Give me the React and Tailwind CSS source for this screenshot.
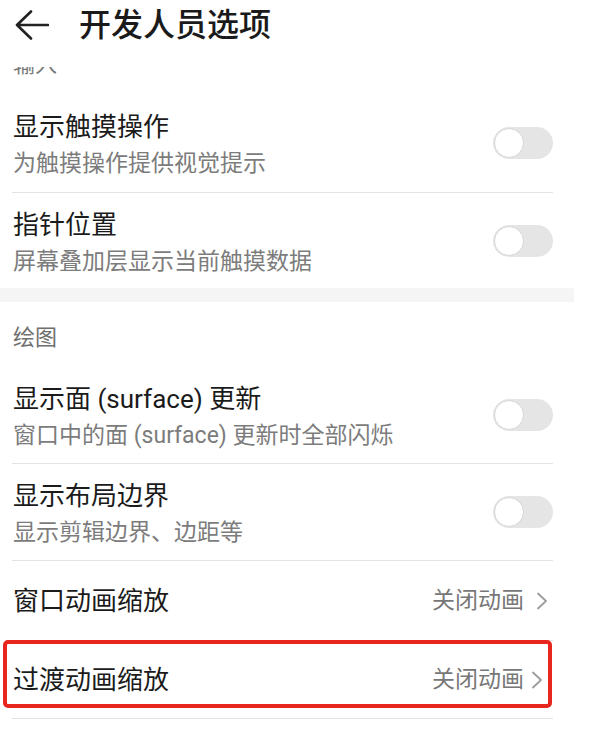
import React from "react";

const font = "font-['Roboto','Noto_Sans_CJK_SC',sans-serif]";

function Toggle() {
  return (
    <div className="flex items-center w-[60px] h-[32px] mb-[6px] rounded-full bg-[#e5e5e5] pl-px shrink-0">
      <div className="w-[30px] h-[30px] rounded-full bg-white border-[1.5px] border-[#d6d6d6]" />
    </div>
  );
}

function SwitchRow({ title, desc, divider, pb = "pb-[8px]" }) {
  return (
    <div
      className={`ml-[12px] mr-[47px] flex items-center justify-between pt-[14px] ${pb} ${
        divider ? "border-b border-[#e3e3e3]" : ""
      }`}
    >
      <div className="pl-px">
        <div className="text-[26px] leading-[36px] text-[#1b1b1b]">{title}</div>
        <div className="text-[23px] leading-[38px] text-[#7c7c7c]">{desc}</div>
      </div>
      <Toggle />
    </div>
  );
}

function Chevron({ className }) {
  return (
    <svg viewBox="0 0 12 18" className={`w-[12px] h-[18px] ${className}`} fill="none">
      <path d="M2 1.5 L10 9 L2 16.5" stroke="#9c9c9c" strokeWidth="1.8" strokeLinecap="round" strokeLinejoin="round" />
    </svg>
  );
}

export default function App() {
  return (
    <div className={`w-[600px] h-[742px] bg-white overflow-hidden ${font}`}>
      {/* header */}
      <div className="flex items-center h-[50px] pl-[14px]">
        <svg viewBox="0 0 35 30" className="w-[35px] h-[30px]" fill="none">
          <path d="M3 15 H34 M17 1.5 L3 15 L17 28.5" stroke="#222" strokeWidth="2.6" strokeLinecap="round" strokeLinejoin="round" />
        </svg>
        <div className="ml-[30px] text-[32px] leading-[40px] font-medium text-[#1a1a1a]">开发人员选项</div>
      </div>

      {/* section label scrolled under the header */}
      <div className="mt-[17px] h-[8px] overflow-hidden">
        <div className="-mt-[17px] pl-[13px] text-[22px] leading-[30px] text-[#777]">输入</div>
      </div>

      <div className="mt-[20px]">
        <SwitchRow title="显示触摸操作" desc="为触摸操作提供视觉提示" divider pb="pb-[9px]" />
        <SwitchRow title="指针位置" desc="屏幕叠加层显示当前触摸数据" pb="pb-[7px]" />
      </div>

      <div className="w-[574px] h-[14px] bg-[#f5f5f5]" />

      <div className="pt-[21px] pb-[14px] pl-[13px] text-[22px] leading-[30px] text-[#707070]">绘图</div>

      <SwitchRow title="显示面 (surface) 更新" desc="窗口中的面 (surface) 更新时全部闪烁" divider />
      <SwitchRow title="显示布局边界" desc="显示剪辑边界、边距等" divider />

      <div className="ml-[12px] mr-[47px] h-[79px] box-content flex items-center justify-between border-b border-[#e3e3e3]">
        <div className="pl-px text-[26px] leading-[36px] text-[#1b1b1b]">窗口动画缩放</div>
        <div className="flex items-center">
          <span className="text-[23px] leading-[30px] text-[#777]">关闭动画</span>
          <Chevron className="ml-[12px] mr-[5px]" />
        </div>
      </div>

      <div className="relative ml-[12px] mr-[47px] h-[77px] box-content flex items-center justify-between border-b border-[#e3e3e3]">
        <div className="pl-px text-[26px] leading-[36px] text-[#1b1b1b]">过渡动画缩放</div>
        <div className="flex items-center">
          <span className="text-[23px] leading-[30px] text-[#777]">关闭动画</span>
          <Chevron className="ml-[7px] mr-[10px]" />
        </div>
        <div className="absolute top-[-1px] left-[-9px] right-[1px] h-[68px] border-4 border-[#e6261f] rounded-[5px] pointer-events-none" />
      </div>
    </div>
  );
}
